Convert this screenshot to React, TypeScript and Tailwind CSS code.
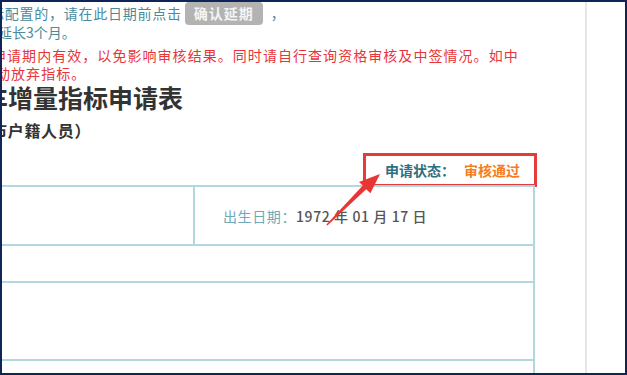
import React from "react";

const cjk = "font-['Noto_Sans_CJK_SC','Noto_Sans',sans-serif] [text-spacing-trim:space-all]";

function StatusArrow() {
  return (
    <svg
      className="pointer-events-none absolute left-0 top-0"
      width="627"
      height="375"
      viewBox="0 0 627 375"
    >
      <polygon
        points="327.4,225.6 366.2,189.3 370.4,193.2 380,174 359,182 362.8,185.6 326.4,224.6"
        fill="#ea3535"
      />
    </svg>
  );
}

export default function App() {
  return (
    <div className={`relative h-[375px] w-[627px] ${cjk}`}>
      <div className="flex h-full w-full overflow-hidden border-2 border-[#0f2557] bg-white">
        <div className="w-[583px] shrink-0 overflow-hidden">
          {/* notice */}
          <div className="flex h-[23px] items-center text-[14px] text-[#4a8a9c]">
            <span className="ml-[-12px] whitespace-nowrap tracking-[0.75px]">标配置的，请在此日期前点击</span>
            <span className="ml-[3px] flex h-[23px] w-[78px] shrink-0 items-center justify-center rounded-[4px] bg-[#b3b3b3] text-[14px] font-semibold tracking-[1px] text-[#f4f4f4]">
              确认延期
            </span>
            <span className="ml-[8px]">，</span>
          </div>
          <p className="ml-[-4px] whitespace-nowrap text-[14px] leading-[14px] text-[#4a8a9c]">延长3个月。</p>
          <div className="mt-[7px] text-[14px] leading-[18px] tracking-[1.05px] text-[#e8353a]">
            <p className="ml-[-10px] whitespace-nowrap">申请期内有效，以免影响审核结果。同时请自行查询资格审核及中签情况。如中</p>
            <p className="ml-[-6px] whitespace-nowrap">动放弃指标。</p>
          </div>

          {/* title */}
          <h1 className="ml-[-19px] whitespace-nowrap text-[25px] font-bold leading-[30px] text-[#333]">车增量指标申请表</h1>
          <p className="ml-[-11px] mt-[8px] whitespace-nowrap text-[16px] font-bold leading-[20px] tracking-[0.7px] text-[#333]">市户籍人员）</p>

          {/* status */}
          <div className="ml-[361px] mt-[13px] flex h-[34px] w-[174px] items-center border-[3px] border-[#e63b3b] pl-[19px] text-[14px] font-bold">
            <span className="text-[#2f6f82]">申请状态：</span>
            <span className="ml-[9px] text-[#f57c1f]">审核通过</span>
          </div>

          {/* form table */}
          <div className="ml-[-20px] mt-[-2px] w-[553px] border-r-2 border-t-2 border-[#b3d7de]">
            <div className="flex h-[59px] border-b-2 border-[#b3d7de]">
              <div className="w-[213px] border-r-2 border-[#b3d7de]" />
              <div className="flex items-center whitespace-nowrap pl-[28px] pt-[2px] text-[14px] tracking-[0.6px]">
                <span className="text-[#6fa8b6]">出生日期：</span>
                <span className="font-medium text-[#555]">1972 年 01 月 17 日</span>
              </div>
            </div>
            <div className="h-[37px] border-b-2 border-[#b3d7de]" />
            <div className="h-[78px] border-b-2 border-[#b3d7de]" />
            <div className="h-[40px]" />
          </div>
        </div>
        <div className="w-[2px] shrink-0 bg-[#e6e6e6]" />
        <div className="flex-1" />
      </div>
      <StatusArrow />
    </div>
  );
}
